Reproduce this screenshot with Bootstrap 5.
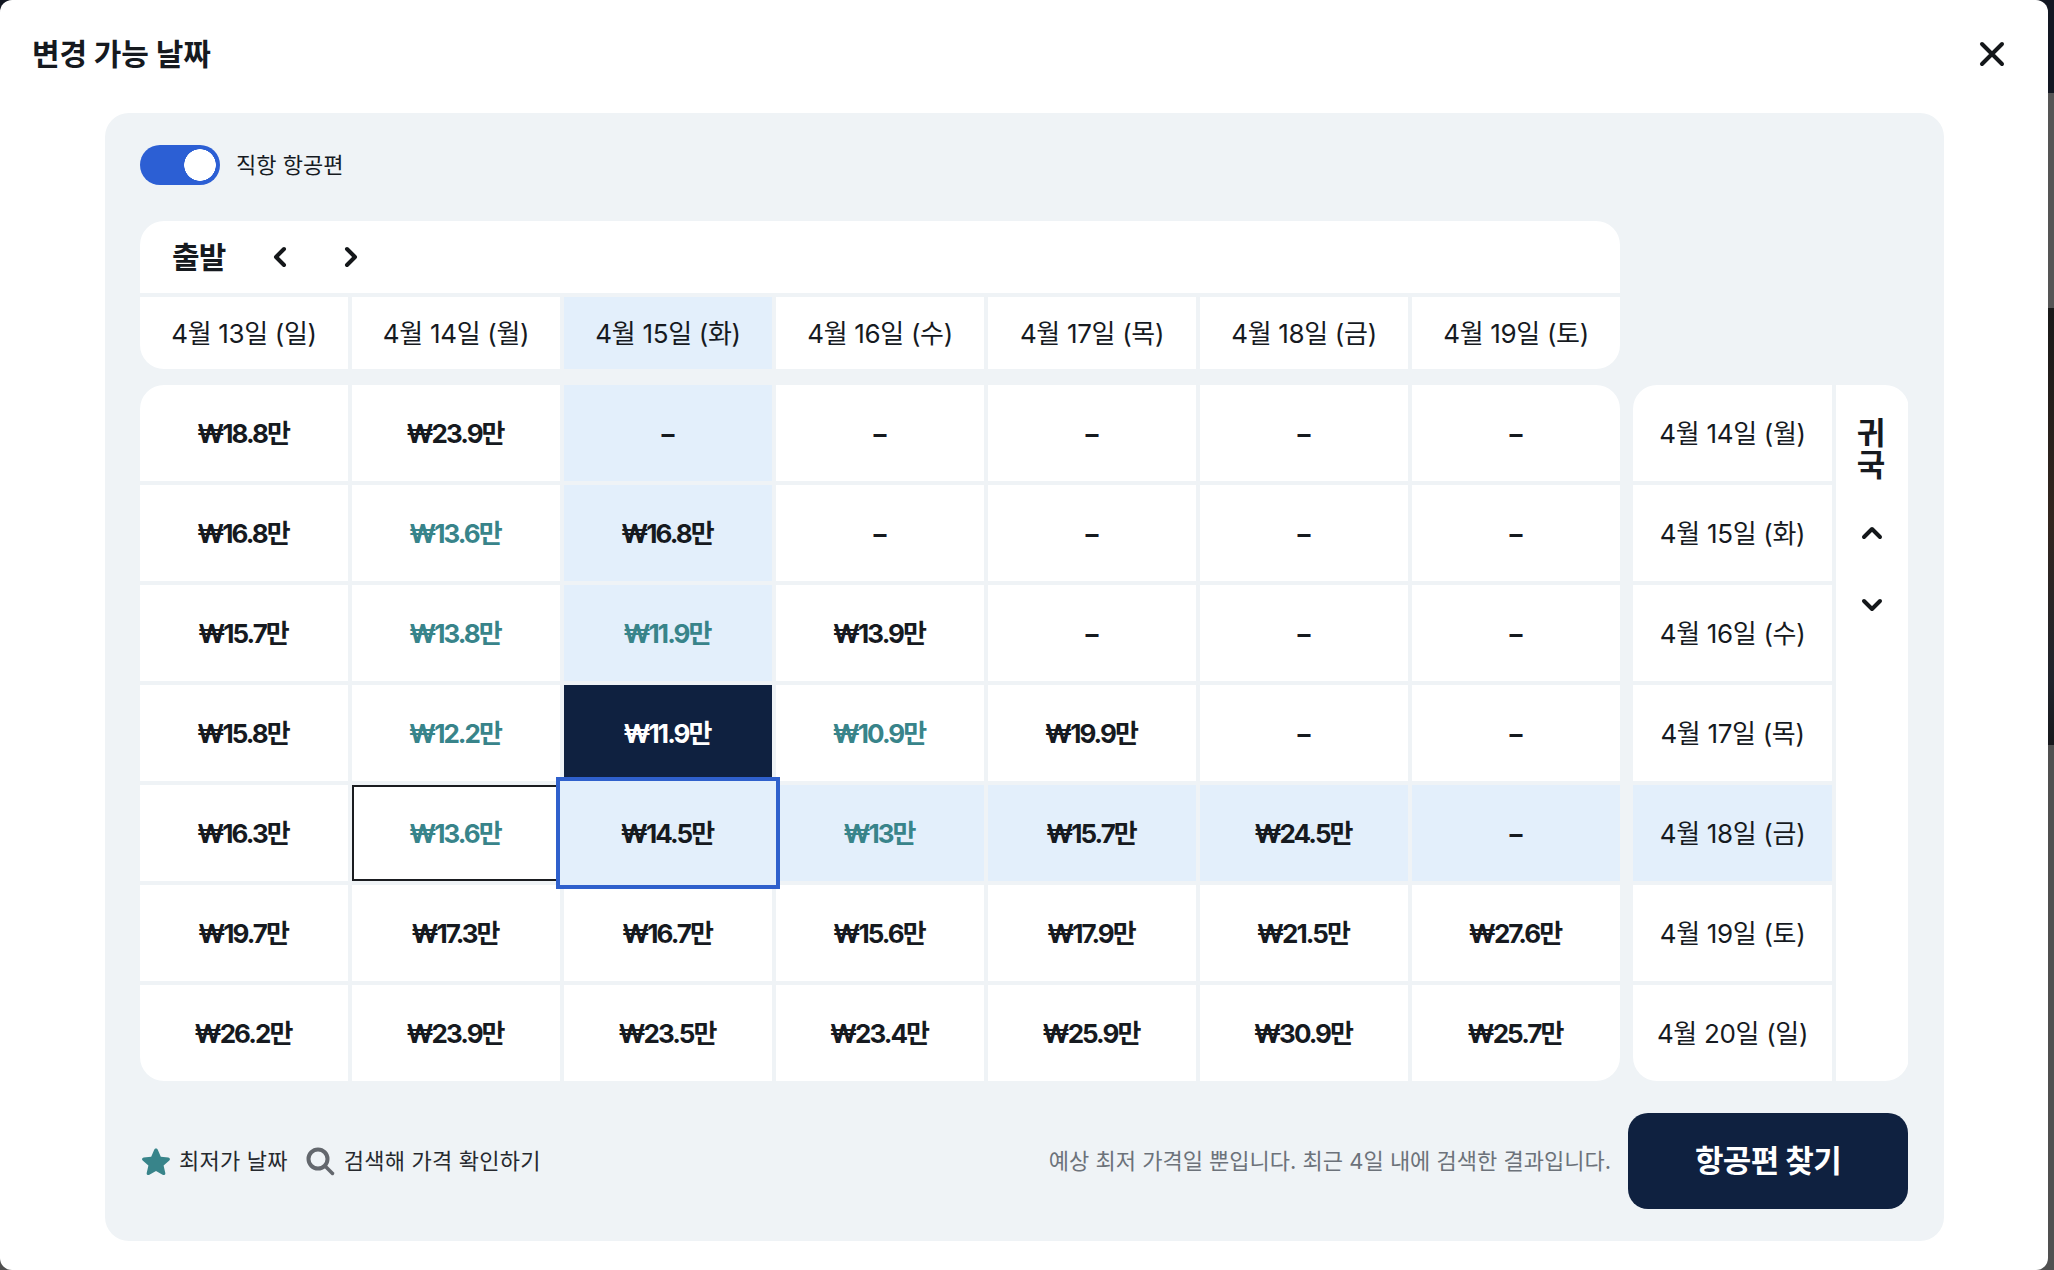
<!DOCTYPE html>
<html lang="ko">
<head>
<meta charset="utf-8">
<title>변경 가능 날짜</title>
<link href="https://cdn.jsdelivr.net/npm/bootstrap@5.3.0/dist/css/bootstrap.min.css" rel="stylesheet">
<style>
html,body{height:100%;overflow:hidden}
body{background:linear-gradient(to bottom,#121722 0,#121722 93px,#555 93px,#555 308px,#191919 308px,#33261f 518px,#20242c 680px,#17181c 745px,#505050 745px,#505050 100%);font-family:Inter,"Noto Sans CJK KR","Noto Sans",sans-serif;color:#161a1f;letter-spacing:-.02em}
.sheet{width:2048px;height:1270px;background:#fff;border-radius:12px;padding:0 0 29px}
.sheet-head{height:113px;padding:0 42px 5px 32px}
.sheet-title{font-size:30px;font-weight:700;margin:0;letter-spacing:-.005em}
.panel{margin:0 104px 0 105px;height:1128px;background:#eff3f6;border-radius:24px;padding:32px 36px 32px 35px}
.direct{height:40px;margin-bottom:36px;gap:16px;font-size:22px;letter-spacing:0}
.direct .form-check-input{width:80px;height:40px;margin:0;float:none;border:0;background-color:#2c5fd4;background-image:radial-gradient(circle at calc(100% - 20px) 50%,#fff 15.5px,transparent 16px);background-size:auto;background-position:0 0}
.form-switch.direct{padding-left:0}
.cal{display:grid;grid-template-columns:1480px 276px;column-gap:13px;row-gap:16px}
.dep{display:grid;gap:4px;width:1480px}
.dep-top{height:72px;background:#fff;border-radius:24px 24px 0 0;padding-left:32px}
.dep-label{font-size:30px;font-weight:700;width:72px;letter-spacing:-.03em}
.arrow{width:71px;display:flex;justify-content:center}
.week,.prices{display:grid;grid-template-columns:repeat(7,208px);gap:4px}
.week{grid-auto-rows:72px;border-radius:0 0 24px 24px;overflow:hidden}
.prices{grid-auto-rows:96px;border-radius:24px;overflow:hidden}
.cell{background:#fff;display:flex;align-items:center;justify-content:center;font-size:26px}
.price{font-weight:700;letter-spacing:-.075em;padding-right:2px}
.low{color:#38848a}
.tint{background:#e3effb}
.dark{background:#0f2140;color:#fff}
.boxed{box-shadow:inset 0 0 0 2px #1a1c20}
.chosen{position:relative;z-index:1;background:#e3effb;box-shadow:0 0 0 4px #e3effb,0 0 0 8px #2f60cc}
.side{display:grid;grid-template-columns:199px 72px;gap:4px;border-radius:24px;overflow:hidden;width:276px}
.side-dates{display:grid;grid-auto-rows:96px;gap:4px}
.back{background:#fff;padding-top:32px}
.back-label{font-size:31px;font-weight:700;line-height:32px;width:32px;text-align:center;letter-spacing:0;margin-bottom:16px;margin-right:2px}
.back-arrow{height:72px;display:flex;align-items:center;justify-content:center;width:100%}
.foot{margin-top:32px;height:96px}
.legend{font-size:22px;letter-spacing:.01em;color:#26292e}
.mark-star{margin-right:7px}
.mark-lens{margin-left:18px;margin-right:9px}
.note{font-size:22px;letter-spacing:0;color:#6c727a;margin-right:17px}
.find{width:280px;height:96px;border-radius:20px;background:#0f2140;color:#fff;font-size:31px;font-weight:700;border:0;letter-spacing:-.02em}
.find:hover{background:#0f2140;color:#fff}
.plain{background:none;border:0;padding:0;line-height:0}
</style>
</head>
<body>
<div class="sheet">
  <div class="sheet-head d-flex align-items-center justify-content-between">
    <h1 class="sheet-title">변경 가능 날짜</h1>
    <button class="plain" type="button" aria-label="닫기"><svg width="28" height="28" viewBox="0 0 28 28" fill="none" stroke="#14171a" stroke-width="4" stroke-linecap="round"><path d="M4 4 24 24M24 4 4 24"/></svg></button>
  </div>
  <div class="panel">
    <div class="form-check form-switch direct d-flex align-items-center">
      <input class="form-check-input" type="checkbox" role="switch" id="direct" checked>
      <label class="form-check-label" for="direct">직항 항공편</label>
    </div>
    <div class="cal">
      <div class="dep">
        <div class="dep-top d-flex align-items-center">
          <span class="dep-label">출발</span>
          <span class="arrow"><svg width="16" height="22" viewBox="0 0 16 22" fill="none" stroke="#14171a" stroke-width="4" stroke-linecap="round" stroke-linejoin="round"><path d="M12 3 4 11l8 8"/></svg></span>
          <span class="arrow"><svg width="16" height="22" viewBox="0 0 16 22" fill="none" stroke="#14171a" stroke-width="4" stroke-linecap="round" stroke-linejoin="round"><path d="m4 3 8 8-8 8"/></svg></span>
        </div>
        <div class="week">
          <div class="cell">4월 13일 (일)</div><div class="cell">4월 14일 (월)</div><div class="cell tint">4월 15일 (화)</div><div class="cell">4월 16일 (수)</div><div class="cell">4월 17일 (목)</div><div class="cell">4월 18일 (금)</div><div class="cell">4월 19일 (토)</div>
        </div>
      </div>
      <div></div>
      <div class="prices">
        <div class="cell price">₩18.8만</div><div class="cell price">₩23.9만</div><div class="cell price tint">–</div><div class="cell price">–</div><div class="cell price">–</div><div class="cell price">–</div><div class="cell price">–</div>
        <div class="cell price">₩16.8만</div><div class="cell price low">₩13.6만</div><div class="cell price tint">₩16.8만</div><div class="cell price">–</div><div class="cell price">–</div><div class="cell price">–</div><div class="cell price">–</div>
        <div class="cell price">₩15.7만</div><div class="cell price low">₩13.8만</div><div class="cell price low tint">₩11.9만</div><div class="cell price">₩13.9만</div><div class="cell price">–</div><div class="cell price">–</div><div class="cell price">–</div>
        <div class="cell price">₩15.8만</div><div class="cell price low">₩12.2만</div><div class="cell price dark">₩11.9만</div><div class="cell price low">₩10.9만</div><div class="cell price">₩19.9만</div><div class="cell price">–</div><div class="cell price">–</div>
        <div class="cell price">₩16.3만</div><div class="cell price low boxed">₩13.6만</div><div class="cell price chosen">₩14.5만</div><div class="cell price low tint">₩13만</div><div class="cell price tint">₩15.7만</div><div class="cell price tint">₩24.5만</div><div class="cell price tint">–</div>
        <div class="cell price">₩19.7만</div><div class="cell price">₩17.3만</div><div class="cell price">₩16.7만</div><div class="cell price">₩15.6만</div><div class="cell price">₩17.9만</div><div class="cell price">₩21.5만</div><div class="cell price">₩27.6만</div>
        <div class="cell price">₩26.2만</div><div class="cell price">₩23.9만</div><div class="cell price">₩23.5만</div><div class="cell price">₩23.4만</div><div class="cell price">₩25.9만</div><div class="cell price">₩30.9만</div><div class="cell price">₩25.7만</div>
      </div>
      <div class="side">
        <div class="side-dates">
          <div class="cell">4월 14일 (월)</div><div class="cell">4월 15일 (화)</div><div class="cell">4월 16일 (수)</div><div class="cell">4월 17일 (목)</div><div class="cell tint">4월 18일 (금)</div><div class="cell">4월 19일 (토)</div><div class="cell">4월 20일 (일)</div>
        </div>
        <div class="back d-flex flex-column align-items-center">
          <div class="back-label">귀국</div>
          <div class="back-arrow"><svg width="24" height="16" viewBox="0 0 24 16" fill="none" stroke="#14171a" stroke-width="4" stroke-linecap="round" stroke-linejoin="round"><path d="m4 12 8-8 8 8"/></svg></div>
          <div class="back-arrow"><svg width="24" height="16" viewBox="0 0 24 16" fill="none" stroke="#14171a" stroke-width="4" stroke-linecap="round" stroke-linejoin="round"><path d="m4 4 8 8 8-8"/></svg></div>
        </div>
      </div>
    </div>
    <div class="foot d-flex align-items-center justify-content-between">
      <div class="legend d-flex align-items-center">
        <svg class="mark-star" width="32" height="32" viewBox="0 0 32 32"><path d="M16 3.500c.8 0 1.400.5 1.800 1.300l3 7 7.500.7c1.700.2 2.200 2 1 3l-5.700 5 1.700 7.400c.4 1.700-1.300 2.800-2.700 1.900L16 25.900l-6.600 3.900c-1.400.9-3.100-.2-2.700-1.900l1.700-7.400-5.700-5c-1.200-1-.7-2.800 1-3l7.500-.7 3-7c.4-.8 1-1.300 1.800-1.300z" fill="#38848a"/></svg>
        <span>최저가 날짜</span>
        <svg class="mark-lens" width="29" height="29" viewBox="0 0 29 29" fill="none" stroke="#63676d" stroke-linecap="round"><circle cx="12" cy="12" r="9.500" stroke-width="4"/><path d="m19.500 19.500 7 7" stroke-width="3.500"/></svg>
        <span>검색해 가격 확인하기</span>
      </div>
      <div class="d-flex align-items-center">
        <span class="note">예상 최저 가격일 뿐입니다. 최근 4일 내에 검색한 결과입니다.</span>
        <button class="btn find" type="button">항공편 찾기</button>
      </div>
    </div>
  </div>
</div>
<script src="https://cdn.jsdelivr.net/npm/bootstrap@5.3.0/dist/js/bootstrap.bundle.min.js"></script>
</body>
</html>
